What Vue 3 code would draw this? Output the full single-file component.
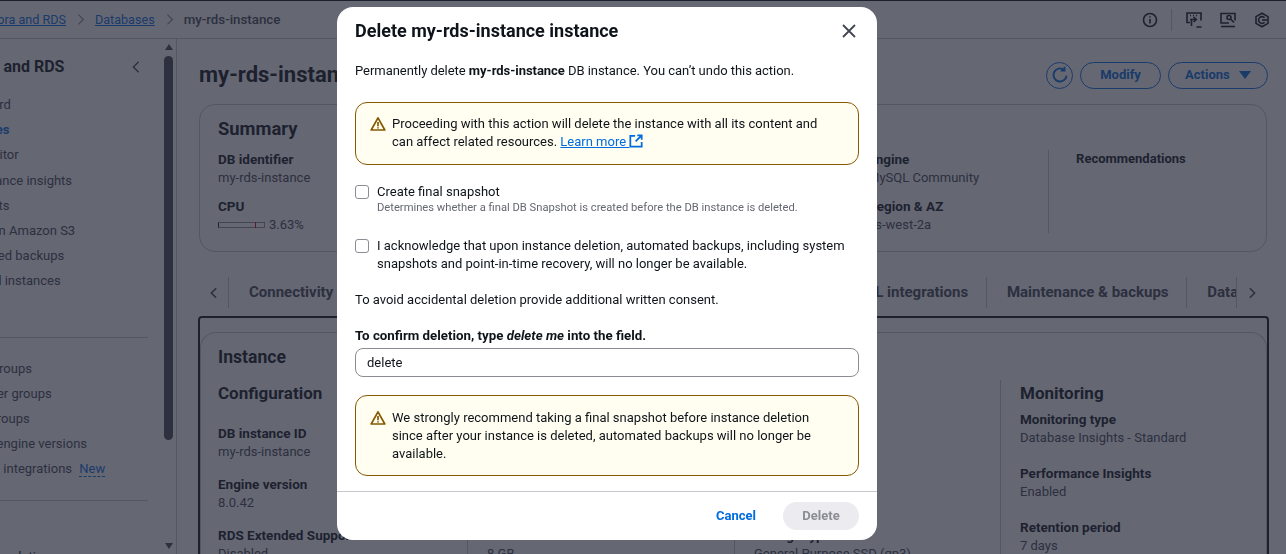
<template>
  <div class="page">
    <header class="topbar">
      <nav class="crumbs">
        <a>Aurora and RDS</a>
        <svg class="sep" viewBox="0 0 16 16"><path d="M5.500 2l6 6-6 6" /></svg>
        <a>Databases</a>
        <svg class="sep" viewBox="0 0 16 16"><path d="M5.500 2l6 6-6 6" /></svg>
        <span>my-rds-instance</span>
      </nav>
      <div class="tools">
        <svg class="tool" viewBox="0 0 16 16"><circle cx="8" cy="8" r="6.500" /><path d="M8 7v4.500M8 4.200v1.400" /></svg>
        <i class="tool-sep"></i>
        <svg class="tool" viewBox="0 0 16 16"><path d="M4 10.500H1V1h14v7.500" /><path d="M4 3.500h1M7 3.500h1M10 3.500h1" /><path d="M4 7.500h6M7.500 5l2.800 2.500-2.800 2.500" /><path d="M5.500 7.500v6.500M10.500 15h5" /></svg>
        <svg class="tool" viewBox="0 0 16 16"><path d="M15 8.500V1.500H1v9.500h8" /><path d="M1 14.500h14" /><circle cx="9" cy="5.500" r="2" /><path d="M10.500 7l3.500 3.500" /></svg>
        <svg class="tool" viewBox="0 0 16 16"><path d="M8 1.200l6 3.400v6.800l-6 3.400-6-3.400V4.600z" /><path d="M10.600 5.800A3.400 3.400 0 1 0 10.600 10.200" /><path d="M8 8h5" /></svg>
      </div>
    </header>

    <div class="shell">
      <aside class="sidebar">
        <div class="side-scroll">
          <div class="side-head">
            <h2>Aurora and RDS</h2>
            <svg class="side-close" viewBox="0 0 16 16"><path d="M11 2L5 8l6 6" /></svg>
          </div>
          <ul class="side-list">
            <li v-for="item in navTop" :key="item" :class="{ active: item === 'Databases' }">{{ item }}</li>
          </ul>
          <hr />
          <ul class="side-list lower">
            <li v-for="item in navLower" :key="item">{{ item }}</li>
            <li>Zero-ETL integrations <span class="new">New</span></li>
          </ul>
          <hr class="second" />
          <div class="side-foot">Recommendations</div>
        </div>
        <div class="scrollbar">
          <i class="arrow up"></i>
          <i class="thumb"></i>
          <i class="arrow down"></i>
        </div>
      </aside>

      <main class="content">
        <div class="title-row">
          <h1>my-rds-instance</h1>
          <div class="actions">
            <button class="btn round">
              <svg viewBox="0 0 16 16"><path d="M13.800 8.500A5.800 5.800 0 1 1 11.500 3.300" /><path d="M12 .6v3.400H8.600" /></svg>
            </button>
            <button class="btn modify">Modify</button>
            <button class="btn menu">Actions <i class="caret"></i></button>
          </div>
        </div>

        <section class="summary">
          <h2>Summary</h2>
          <div class="summary-grid">
            <div v-for="col in summary" :key="col[0].label" class="summary-col">
              <dl v-for="kv in col" :key="kv.label" class="kv">
                <dt>{{ kv.label }}</dt>
                <dd v-if="kv.label !== 'CPU'">{{ kv.value }}</dd>
                <dd v-else class="cpu"><i class="cpu-bar"><b :style="{ left: kv.tick + 'px' }"></b></i>{{ kv.value }}</dd>
              </dl>
            </div>
            <div class="summary-col recs"><dl class="kv"><dt>Recommendations</dt></dl></div>
          </div>
        </section>

        <div class="tabs">
          <svg class="tab-arrow" viewBox="0 0 16 16"><path d="M10.500 2.500L5 8l5.500 5.500" /></svg>
          <div class="tab-strip">
            <a v-for="tab in tabs" :key="tab" class="tab">{{ tab }}</a>
          </div>
          <svg class="tab-arrow" viewBox="0 0 16 16"><path d="M5.500 2.500L11 8l-5.500 5.500" /></svg>
        </div>

        <div class="panel">
          <section class="card">
            <h2>Instance</h2>
            <div class="card-grid">
              <div v-for="col in details" :key="col.title" :class="['detail', { tight: col.tight }]">
                <h3>{{ col.title }}</h3>
                <dl v-for="kv in col.rows" :key="kv[0]" class="kv">
                  <dt>{{ kv[0] }}</dt>
                  <dd>{{ kv[1] }}</dd>
                </dl>
              </div>
            </div>
          </section>
        </div>
      </main>
    </div>
  </div>

  <div class="overlay"></div>

  <div class="modal" role="dialog" aria-modal="true">
    <div class="modal-head">
      <h2>Delete my-rds-instance instance</h2>
      <svg class="close" viewBox="0 0 16 16"><path d="M2 2l12 12M14 2L2 14" /></svg>
    </div>
    <div class="modal-body">
      <p class="lead">Permanently delete <b>my-rds-instance</b> DB instance. You can’t undo this action.</p>

      <div class="alert first">
        <svg class="warn" viewBox="0 0 16 16"><path d="M8 1.800L1.200 14h13.600z" /><path d="M8 6v4.200M8 11.300v1.300" /></svg>
        <p>Proceeding with this action will delete the instance with all its content and can affect related resources. <a class="link">Learn more </a><svg class="ext" viewBox="0 0 16 16"><path d="M7 2H1.500v12.500h13V9" /><path d="M9.500 1.500h5v5M14.500 1.500L7.500 8.500" /></svg></p>
      </div>

      <label class="check first-check">
        <input type="checkbox" />
        <span>Create final snapshot<small>Determines whether a final DB Snapshot is created before the DB instance is deleted.</small></span>
      </label>

      <label class="check second-check">
        <input type="checkbox" />
        <span>I acknowledge that upon instance deletion, automated backups, including system snapshots and point-in-time recovery, will no longer be available.</span>
      </label>

      <p class="consent">To avoid accidental deletion provide additional written consent.</p>

      <label class="confirm" for="confirm-field">To confirm deletion, type <em>delete me</em> into the field.</label>
      <input id="confirm-field" v-model="confirmText" class="field" type="text" />

      <div class="alert last">
        <svg class="warn" viewBox="0 0 16 16"><path d="M8 1.800L1.200 14h13.600z" /><path d="M8 6v4.200M8 11.300v1.300" /></svg>
        <p>We strongly recommend taking a final snapshot before instance deletion since after your instance is deleted, automated backups will no longer be available.</p>
      </div>
    </div>
    <div class="modal-foot">
      <button class="cancel">Cancel</button>
      <button class="delete" disabled>Delete</button>
    </div>
  </div>
</template>

<script setup>
import { ref } from 'vue'

const confirmText = ref('delete')

const navTop = [
  'Dashboard',
  'Databases',
  'Query Editor',
  'Performance insights',
  'Snapshots',
  'Exports in Amazon S3',
  'Automated backups',
  'Reserved instances'
]

const navLower = ['Subnet groups', 'Parameter groups', 'Option groups', 'Custom engine versions']

const summary = [
  [
    { label: 'DB identifier', value: 'my-rds-instance' },
    { label: 'CPU', value: '3.63%', tick: 36 }
  ],
  [
    { label: 'Status', value: 'Available' },
    { label: 'Class', value: 'db.t4g.micro' }
  ],
  [
    { label: 'Role', value: 'Instance' },
    { label: 'Current activity', value: '0 Connections' }
  ],
  [
    { label: 'Engine', value: 'MySQL Community' },
    { label: 'Region & AZ', value: 'us-west-2a' }
  ]
]

const tabs = [
  'Connectivity & security',
  'Monitoring',
  'Logs & events',
  'Configuration',
  'Zero-ETL integrations',
  'Maintenance & backups',
  'Data migrations'
]

const details = [
  {
    title: 'Configuration',
    rows: [
      ['DB instance ID', 'my-rds-instance'],
      ['Engine version', '8.0.42'],
      ['RDS Extended Support', 'Disabled']
    ]
  },
  {
    title: 'Instance class',
    rows: [
      ['Instance class', 'db.t4g.micro'],
      ['vCPU', '2'],
      ['RAM', '8 GB']
    ]
  },
  {
    title: 'Storage',
    rows: [
      ['Encryption', 'Enabled'],
      ['Storage', '20 GiB'],
      ['Storage type', 'General Purpose SSD (gp3)']
    ]
  },
  {
    title: 'Monitoring',
    tight: true,
    rows: [
      ['Monitoring type', 'Database Insights - Standard'],
      ['Performance Insights', 'Enabled'],
      ['Retention period', '7 days']
    ]
  }
]
</script>

<style>
html,
body {
  margin: 0;
  height: 100%;
  overflow: hidden;
  background: #fff;
}
</style>

<style scoped>
.page,
.modal {
  font-family: Roboto, "Noto Sans", sans-serif;
  font-size: 13px;
  line-height: 18px;
  color: #0f141a;
}

h1,
h2,
h3,
p,
dl,
dd,
ul {
  margin: 0;
  padding: 0;
}

/* the console is scrolled sideways, so its left edge hangs off the page */
.page {
  margin-left: -60px;
  width: 1346px;
  height: 554px;
  overflow: hidden;
  border-top: 1px solid #0f141a;
  box-sizing: border-box;
}

.topbar {
  display: flex;
  justify-content: space-between;
  align-items: center;
  height: 37px;
  border-bottom: 1px solid #c6c6cd;
  padding: 0 16px 0 38px;
}

.crumbs {
  display: flex;
  align-items: center;
  gap: 7px;
  color: #424650;
}

.crumbs a {
  color: #006ce0;
  text-decoration: underline;
  font-size: 12.6px;
}

.crumbs span {
  font-size: 13.3px;
  font-weight: 500;
}

.sep {
  width: 15px;
  height: 13px;
  fill: none;
  stroke: #8c8c94;
  stroke-width: 1.5;
}

.tools {
  display: flex;
  align-items: center;
}

.tool {
  width: 16px;
  height: 16px;
  fill: none;
  stroke: #0f141a;
  stroke-width: 1.6;
  margin-left: 18px;
}

.tool-sep {
  width: 1px;
  height: 22px;
  background: #c6c6cd;
  margin-left: 13px;
  margin-right: -4px;
}

.shell {
  display: flex;
}

.sidebar {
  position: relative;
  display: flex;
  flex: none;
  width: 237px;
  height: 520px;
  border-right: 1px solid #c6c6cd;
  box-sizing: border-box;
}

.side-scroll {
  flex: 1;
  padding: 0 16px 0 0;
  min-width: 0;
}

.side-head {
  display: flex;
  align-items: center;
  justify-content: space-between;
  height: 24px;
  margin-top: 16px;
  padding: 0 5px 0 11px;
}

.side-head h2 {
  font-size: 16px;
  font-weight: 700;
}

.side-close {
  width: 14px;
  height: 14px;
  fill: none;
  stroke: #424650;
  stroke-width: 1.6;
}

.side-list {
  list-style: none;
  color: #424650;
  padding-left: 8px;
}

.side-list:first-of-type {
  margin-top: 13px;
}

.side-list li {
  height: 25.2px;
  line-height: 25px;
}

.side-list li.active {
  color: #006ce0;
  font-weight: 700;
}

hr {
  border: 0;
  border-top: 1px solid #c6c6cd;
  margin: 43px 0 18px;
}

hr.second {
  margin: 19px 0 47px;
}

.new {
  color: #006ce0;
  border-bottom: 1px dashed #006ce0;
  margin-left: 4px;
}

.side-foot {
  padding-left: 8px;
}

.scrollbar {
  display: flex;
  flex-direction: column;
  align-items: center;
  width: 9px;
  margin-right: 3px;
}

.arrow {
  width: 0;
  height: 0;
  border-left: 4.500px solid transparent;
  border-right: 4.500px solid transparent;
}

.arrow.up {
  margin-top: 5px;
  border-bottom: 6px solid #424650;
}

.arrow.down {
  margin-top: 103px;
  border-top: 6px solid #424650;
}

.thumb {
  width: 9px;
  height: 384px;
  margin-top: 6px;
  border-radius: 5px;
  background: #424650;
}

.content {
  flex: none;
  width: 1109px;
  padding: 22px 0 0 22px;
  box-sizing: border-box;
  min-width: 0;
}

.title-row {
  display: flex;
  justify-content: space-between;
  align-items: center;
  height: 28px;
  padding-right: 18px;
}

.title-row h1 {
  font-size: 22px;
  font-weight: 700;
}

.actions {
  display: flex;
  gap: 7px;
}

.btn {
  height: 27px;
  border: 1px solid #006ce0;
  border-radius: 14px;
  background: none;
  color: #006ce0;
  font: inherit;
  font-weight: 700;
  padding: 0;
}

.round {
  width: 27px;
}

.round svg {
  display: block;
  width: 18px;
  height: 18px;
  margin: auto;
  fill: none;
  stroke: #006ce0;
  stroke-width: 1.7;
}

.modify {
  width: 81px;
}

.menu {
  width: 100px;
}

.caret {
  display: inline-block;
  width: 0;
  height: 0;
  margin-left: 6px;
  border-left: 6px solid transparent;
  border-right: 6px solid transparent;
  border-top: 8px solid #006ce0;
}

.summary {
  height: 148px;
  margin: 15px 19px 0 0;
  border: 1px solid #c6c6cd;
  border-radius: 16px;
  padding: 13px 18px 0;
  box-sizing: border-box;
}

.summary h2,
.card h2 {
  font-size: 18px;
  line-height: 22px;
  font-weight: 700;
}

.summary h2 {
  font-size: 18.4px;
}

.card h2 {
  font-size: 17.6px;
}

.summary-grid {
  display: grid;
  grid-template-columns: repeat(3, 216.7px) 180px 1fr;
  margin-top: 10px;
}

.summary-col {
  display: flex;
  flex-direction: column;
  gap: 10px;
}

.recs {
  border-left: 1px solid #c6c6cd;
  padding-left: 27px;
  height: 83px;
}

.kv dt {
  font-size: 13.500px;
  font-weight: 700;
}

.recs .kv dt {
  font-size: 13px;
}

.kv dd {
  padding-top: 1px;
  color: #424650;
}

.cpu {
  display: flex;
  align-items: center;
  gap: 4px;
}

.cpu-bar {
  position: relative;
  width: 47px;
  height: 6px;
  border: 1px solid #8c8c94;
  box-sizing: border-box;
  border-left-color: #0f141a;
}

.cpu-bar b {
  position: absolute;
  top: -1px;
  width: 1px;
  height: 6px;
  background: #db0000;
}

.tabs {
  display: flex;
  align-items: center;
  height: 35px;
  margin: 23px 19px 0 0;
}

.tab-arrow {
  flex: none;
  width: 14px;
  height: 14px;
  margin: 0 8px;
  fill: none;
  stroke: #424650;
  stroke-width: 1.8;
}

.tab-arrow:first-child {
  margin-right: 7px;
}

.tab-strip {
  display: flex;
  flex: 1;
  min-width: 0;
  overflow: hidden;
  border-right: 1px solid #c6c6cd;
}

.tab {
  flex: none;
  padding: 0 17.8px 0 20px;
  height: 31px;
  line-height: 31px;
  font-size: 15px;
  font-weight: 700;
  color: #424650;
  border-left: 1px solid #c6c6cd;
}

.panel {
  margin: 6px 17px 0 -1px;
  border: 2px solid #0f141a;
  border-bottom: 0;
  border-radius: 4px 4px 0 0;
  padding-top: 14px;
  height: 400px;
}

.card {
  border-top: 1px solid #c6c6cd;
  border-left: 1px solid #c6c6cd;
  border-right: 1px solid #c6c6cd;
  border-radius: 16px 16px 0 0;
  padding: 13px 0 0 17px;
}

.card-grid {
  display: grid;
  grid-template-columns: 268px 267px 266px 267px;
  margin-top: 12px;
}

.detail {
  padding-left: 19px;
  margin-left: -19px;
  border-left: 1px solid #c6c6cd;
}

.detail:first-child {
  border-left: 0;
}

.detail h3 {
  font-size: 17px;
  line-height: 20px;
  font-weight: 700;
  margin: 3px 0 21px;
}

.detail.tight h3 {
  margin-bottom: 7px;
}

.detail .kv {
  margin-bottom: 14px;
}

.detail.tight .kv {
  margin-bottom: 17px;
}

.overlay {
  position: fixed;
  inset: 0;
  background: rgba(35, 39, 55, 0.7);
}

.modal {
  position: fixed;
  top: 7px;
  left: 337px;
  width: 540px;
  height: 533px;
  background: #fff;
  border-radius: 16px;
  overflow: hidden;
}

.modal-head {
  display: flex;
  justify-content: space-between;
  align-items: center;
  padding: 13px 18px 0;
}

.modal-head h2 {
  font-size: 18px;
  line-height: 22px;
  font-weight: 700;
}

.close {
  width: 16px;
  height: 16px;
  margin-right: 2px;
  fill: none;
  stroke: #424650;
  stroke-width: 1.8;
}

.modal-body {
  padding: 20px 18px 0;
  height: 449px;
  box-sizing: border-box;
}

.lead {
  letter-spacing: -0.04px;
}

.alert {
  display: flex;
  gap: 6px;
  background: #fffef0;
  border: 1px solid #855900;
  border-radius: 12px;
  padding: 12px 40px 13px 14px;
}

.alert.first {
  margin-top: 22px;
}

.alert.last {
  margin-top: 18px;
  padding-top: 13px;
  padding-bottom: 12px;
}

.warn {
  flex: none;
  width: 16px;
  height: 16px;
  margin-top: 1px;
  fill: none;
  stroke: #855900;
  stroke-width: 1.7;
  stroke-linejoin: round;
}

.link {
  color: #006ce0;
  text-decoration: underline;
}

.ext {
  width: 14px;
  height: 14px;
  vertical-align: -2px;
  fill: none;
  stroke: #006ce0;
  stroke-width: 2;
}

.check {
  display: flex;
  gap: 8px;
}

.check input {
  appearance: none;
  flex: none;
  width: 14px;
  height: 14px;
  margin: 2px 0 0;
  border: 1px solid #8c8c94;
  border-radius: 3px;
  background: #fff;
}

.first-check {
  margin-top: 18px;
}

.second-check {
  margin-top: 22px;
}

.check small {
  display: block;
  font-size: 11.2px;
  line-height: 14px;
  color: #656871;
}

.consent {
  margin-top: 18px;
}

.confirm {
  display: block;
  margin-top: 18px;
  font-size: 13.300px;
  font-weight: 700;
}

.confirm em {
  font-style: italic;
}

.field {
  display: block;
  width: 100%;
  height: 29px;
  margin-top: 3px;
  border: 1px solid #8c8c94;
  border-radius: 8px;
  padding: 0 11px;
  box-sizing: border-box;
  font: inherit;
  color: #0f141a;
  outline: none;
}

.modal-foot {
  display: flex;
  justify-content: flex-end;
  align-items: center;
  gap: 27px;
  height: 48px;
  border-top: 1px solid #c6c6cd;
  padding: 0 18px;
}

.modal-foot button {
  font: inherit;
  font-weight: 700;
  border: 0;
  padding: 0;
}

.cancel {
  background: none;
  color: #006ce0;
}

.delete {
  width: 76px;
  height: 28px;
  border-radius: 14px;
  background: #ebebf0;
  color: #8c8c94;
}
</style>
